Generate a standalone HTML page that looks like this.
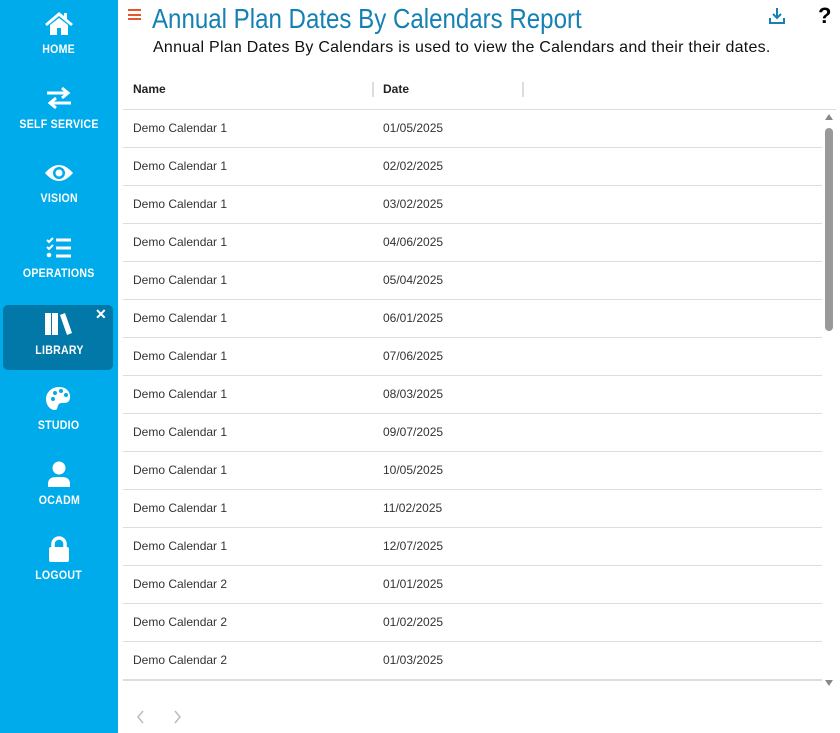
<!DOCTYPE html>
<html><head><meta charset="utf-8"><style>
*{margin:0;padding:0;box-sizing:border-box}
body{width:840px;height:733px;overflow:hidden;background:#fff;font-family:"Liberation Sans",sans-serif;position:relative}
#side{position:absolute;left:0;top:0;width:118px;height:733px;background:#00abeb}
.nav{position:absolute;left:0;width:118px;text-align:center;color:#fff;font-weight:bold;font-size:12px;letter-spacing:0.3px}
.nav svg{display:block;margin:0 auto}
.nav span{display:inline-block;transform:scaleX(0.88);margin-top:6px}
.active{position:absolute;left:3px;top:305px;width:110px;height:65px;background:#0178a8;border-radius:5px}
.title{position:absolute;left:152px;top:3px;font-size:28px;color:#1480b4;white-space:nowrap;transform:scaleX(0.86);transform-origin:left}
.sub{position:absolute;left:153px;top:39px;font-size:16px;color:#111;white-space:nowrap;letter-spacing:0.25px}
.hdr{position:absolute;top:71px;left:123px;width:713px;height:39px;border-bottom:1px solid #ddd;font-size:12px;font-weight:bold;color:#222}
.hdr div{position:absolute;top:11px}
.sep{position:absolute;top:11px;width:2px;height:15px;background:#ddd}
.row{position:absolute;left:123px;width:699px;height:38px;border-bottom:1px solid #ddd;font-size:12px;color:#333}
.row div{position:absolute;top:11px}
</style></head><body>
<div id="side">
 <div class="active"></div>
 <div class="nav" style="top:10px"><svg width="30" height="26" viewBox="0 0 30 26"><path d="M15 2L1 14l2 2 12-10 12 10 2-2-6-5V3h-3v3z M6 15v10h7v-7h4v7h7V15l-9-7z" fill="#fff"/></svg><span>HOME</span></div>
 <div class="nav" style="top:85px"><svg width="28" height="26" viewBox="0 0 28 26"><path d="M2 8h20M17 3l6 5-6 5M26 18H6M11 13l-6 5 6 5" stroke="#fff" stroke-width="3" fill="none"/></svg><span>SELF SERVICE</span></div>
 <div class="nav" style="top:161px"><svg width="30" height="24" viewBox="0 0 30 24"><path d="M1 12Q15-4 29 12Q15 28 1 12z" fill="#fff"/><circle cx="15" cy="12" r="6" fill="#00abeb"/><circle cx="15" cy="12" r="3.5" fill="#fff"/></svg><span>VISION</span></div>
 <div class="nav" style="top:236px"><svg width="28" height="24" viewBox="0 0 28 24"><path d="M2 4l2 2 4-4M2 11l2 2 4-4" stroke="#fff" stroke-width="2" fill="none"/><circle cx="4" cy="19" r="2.3" fill="#fff"/><path d="M11 4h15M11 12h15M11 20h15" stroke="#fff" stroke-width="3"/></svg><span>OPERATIONS</span></div>
 <div class="nav" style="top:311px"><svg width="32" height="26" viewBox="0 0 32 26"><rect x="2" y="2" width="6" height="22" fill="#fff"/><rect x="9" y="2" width="6" height="22" fill="#fff"/><path d="M17 4l5-2 7 20-5 2z" fill="#fff"/></svg><span>LIBRARY</span></div>
 <div style="position:absolute;left:95px;top:306px;color:#fff;font-weight:bold;font-size:14px">✕</div>
 <div class="nav" style="top:386px"><svg width="28" height="26" viewBox="0 0 28 26"><path d="M14 1C6 1 1 7 1 13c0 6 4 11 9 11 3 0 2-4 4-6 2-2 6 0 9-2 4-3 3-15-9-15z" fill="#fff"/><circle cx="8" cy="13" r="2" fill="#00abeb"/><circle cx="10" cy="7" r="2" fill="#00abeb"/><circle cx="16" cy="5" r="2" fill="#00abeb"/><circle cx="21" cy="9" r="2" fill="#00abeb"/></svg><span>STUDIO</span></div>
 <div class="nav" style="top:461px"><svg width="28" height="26" viewBox="0 0 28 26"><circle cx="14" cy="7" r="6.5" fill="#fff"/><path d="M3 26v-3q0-7 8-7h6q8 0 8 7v3z" fill="#fff"/></svg><span>OCADM</span></div>
 <div class="nav" style="top:536px"><svg width="28" height="26" viewBox="0 0 28 26"><path d="M8 12V8a6 6 0 0 1 12 0v4" stroke="#fff" stroke-width="3.5" fill="none"/><rect x="4" y="11" width="20" height="15" rx="2" fill="#fff"/></svg><span>LOGOUT</span></div>
</div>
<div style="position:absolute;left:128px;top:9px;width:13px;height:11px;border-top:2px solid #e8542c;border-bottom:2px solid #e8542c"><div style="margin-top:2.5px;height:2px;background:#e8542c"></div></div>
<div class="title">Annual Plan Dates By Calendars Report</div>
<div class="sub">Annual Plan Dates By Calendars is used to view the Calendars and their their dates.</div>
<svg style="position:absolute;left:768px;top:7px" width="18" height="18" viewBox="0 0 18 18"><path d="M9 1v10M5 7l4 4 4-4M2 11v5h14v-5" stroke="#1480b4" stroke-width="2" fill="none"/></svg>
<div style="position:absolute;left:818px;top:3px;font-size:22px;font-weight:bold;color:#000">?</div>
<div class="hdr"><div style="left:10px">Name</div><div class="sep" style="left:249px"></div><div style="left:260px">Date</div><div class="sep" style="left:399px"></div></div>
<div id="rows"></div>
<div style="position:absolute;left:825px;top:114px;width:0;height:0;border-left:4px solid transparent;border-right:4px solid transparent;border-bottom:6px solid #888"></div>
<div style="position:absolute;left:825px;top:128px;width:8px;height:203px;background:#999;border-radius:4px"></div>
<div style="position:absolute;left:825px;top:680px;width:0;height:0;border-left:4px solid transparent;border-right:4px solid transparent;border-top:6px solid #888"></div>
<div style="position:absolute;left:123px;top:680px;width:699px;border-top:1px solid #ddd"></div>
<svg style="position:absolute;left:135px;top:710px" width="50" height="14" viewBox="0 0 50 14"><path d="M8 1L3 7l5 6M40 1l5 6-5 6" stroke="#bbb" stroke-width="1.5" fill="none"/></svg>
<script>
var d=["01/05/2025","02/02/2025","03/02/2025","04/06/2025","05/04/2025","06/01/2025","07/06/2025","08/03/2025","09/07/2025","10/05/2025","11/02/2025","12/07/2025","01/01/2025","01/02/2025","01/03/2025"];
var h="";for(var i=0;i<d.length;i++){h+='<div class="row" style="top:'+(110+i*38)+'px"><div style="left:10px">Demo Calendar '+(i<12?1:2)+'</div><div style="left:260px">'+d[i]+'</div></div>';}
document.getElementById("rows").innerHTML=h;
</script>
</body></html>
